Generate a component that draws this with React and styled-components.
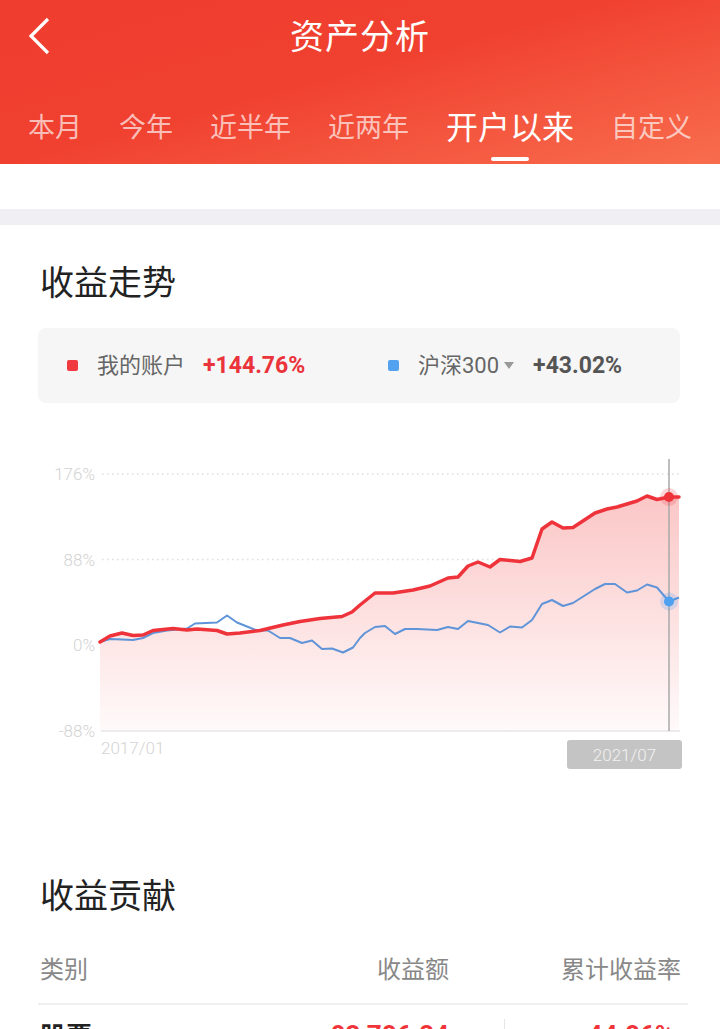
import React from 'react';
import styled, { createGlobalStyle } from 'styled-components';

const GlobalStyle = createGlobalStyle`
  html, body {
    margin: 0;
    padding: 0;
    background: #fff;
  }
  body {
    font-family: Roboto, "Noto Sans CJK SC", "Noto Sans", sans-serif;
    -webkit-font-smoothing: antialiased;
  }
`;

const Page = styled.div`
  width: 720px;
  height: 1029px;
  overflow: hidden;
  background: #fff;
`;

const Header = styled.header`
  height: 164px;
  background: linear-gradient(165deg, #ef3d2f 0%, #f0402f 45%, #f86d4e 100%);
  color: #fff;
`;

const TopBar = styled.div`
  height: 74px;
  display: grid;
  grid-template-columns: 100px 1fr 100px;
  align-items: center;
`;

const Back = styled.div`
  padding-left: 28px;
  display: flex;
  align-items: center;
  svg {
    display: block;
  }
`;

const Title = styled.h1`
  margin: 0;
  text-align: center;
  font-size: 34px;
  font-weight: 400;
  line-height: 40px;
  letter-spacing: 1px;
`;

const Tabs = styled.nav`
  height: 90px;
  display: flex;
  align-items: flex-end;
  gap: 37px;
  padding-left: 28px;
`;

const Tab = styled.div`
  display: flex;
  flex-direction: column;
  align-items: center;
  padding-bottom: 3px;
  .label {
    line-height: 40px;
    font-size: ${(p) => (p.$active ? '32px' : '27px')};
    color: ${(p) => (p.$active ? '#fff' : 'rgba(255, 255, 255, 0.66)')};
    white-space: nowrap;
  }
`;

const Indicator = styled.span`
  margin-top: 9px;
  width: 38px;
  height: 4px;
  border-radius: 2px;
  background: ${(p) => (p.$active ? '#fff' : 'transparent')};
`;

const Spacer = styled.div`
  height: 45px;
`;

const Band = styled.div`
  height: 16px;
  background: #f0f0f4;
`;

const Section = styled.section`
  padding: ${(p) => p.$top}px 32px 0 38px;
`;

const SectionTitle = styled.h2`
  margin: 0 0 0 2px;
  font-size: 34px;
  font-weight: 400;
  line-height: 40px;
  color: #222;
`;

const Legend = styled.div`
  margin-top: 25px;
  width: 642px;
  height: 75px;
  border-radius: 8px;
  background: #f6f6f6;
  display: grid;
  grid-template-columns: 1fr 1fr;
  align-items: center;
`;

const LegendItem = styled.div`
  display: flex;
  align-items: center;
  padding-left: 29px;
`;

const Swatch = styled.span`
  width: 11px;
  height: 11px;
  border-radius: 2px;
  background: ${(p) => p.$color};
  margin-right: 19px;
`;

const LegendName = styled.span`
  font-size: 22px;
  color: #666;
  line-height: 30px;
`;

const Caret = styled.span`
  margin-left: 5px;
  width: 0;
  height: 0;
  border-left: 5px solid transparent;
  border-right: 5px solid transparent;
  border-top: 7px solid #999;
`;

const LegendValue = styled.span`
  margin-left: ${(p) => p.$gap}px;
  font-size: 23px;
  font-weight: 700;
  color: ${(p) => p.$color};
  line-height: 30px;
`;

const ChartWrap = styled.div`
  margin: 37px 0 0 -38px;
  svg {
    display: block;
  }
`;

const Table = styled.div`
  margin-top: 37px;
  width: 650px;
`;

const Row = styled.div`
  display: grid;
  grid-template-columns: 1fr 200px 239px;
  align-items: start;
  padding: ${(p) => (p.$head ? '0 0 16px' : '14px 0 0')};
  border-bottom: ${(p) => (p.$head ? '2px solid #efefef' : 'none')};
`;

const Cell = styled.div`
  text-align: ${(p) => p.$align || 'left'};
  padding: 0 ${(p) => p.$pr || 0}px 0 ${(p) => p.$pl || 0}px;
  font-size: ${(p) => (p.$head ? '24px' : '26px')};
  line-height: ${(p) => (p.$head ? '34px' : '36px')};
  font-weight: ${(p) => (p.$bold ? 700 : 400)};
  color: ${(p) => p.$color || (p.$head ? '#888' : '#222')};
  white-space: nowrap;
`;

const Amount = styled.div`
  text-align: right;
  font-size: 26px;
  line-height: 32px;
  font-weight: 700;
  color: #f0343a;
  white-space: nowrap;
`;

const RateCell = styled.div`
  display: flex;
  align-items: flex-start;
  justify-content: space-between;
  padding-right: 14px;
  font-size: 26px;
  line-height: 32px;
  font-weight: 700;
  color: #f0343a;
`;

const Divider = styled.span`
  margin: 0 0 0 55px;
  width: 1px;
  height: 40px;
  background: #e6e6e6;
`;

const tabs = ['本月', '今年', '近半年', '近两年', '开户以来', '自定义'];

const mine = [
  [100, 642], [110, 636], [122, 633], [133, 635.5], [143, 635], [153, 630.5],
  [173, 628.5], [187, 630], [197, 629], [217, 630.5], [227, 634], [240, 633],
  [260, 630.5], [283, 625], [300, 621.5], [320, 618.5], [342, 616.5], [352, 612],
  [360, 605], [375, 593], [393, 593], [413, 590], [430, 586], [448, 578],
  [458, 577], [468, 566], [478, 562], [490, 567], [500, 559.5], [520, 561.5],
  [532, 558], [542, 529], [552, 522], [563, 528], [573, 527.5], [595, 513],
  [607, 509], [617, 507], [637, 501], [647, 496], [657, 499.5], [669, 497],
  [679, 497],
];

const index = [
  [100, 642], [110, 639], [133, 640], [143, 638], [153, 633], [167, 630.5],
  [187, 628.5], [195, 623.5], [217, 622.5], [227, 615.5], [237, 622.5],
  [257, 630.5], [268, 630.5], [280, 638], [290, 638], [302, 643], [312, 640.5],
  [322, 649], [332, 648.5], [343, 652.5], [353, 647.5], [360, 638], [365, 633],
  [375, 627], [385, 626], [395, 634], [405, 629], [417, 629], [437, 630],
  [448, 627], [458, 629], [468, 621], [488, 625], [500, 632.5], [510, 626.5],
  [522, 627.5], [532, 620], [542, 604], [552, 600], [563, 606], [573, 603],
  [595, 589], [605, 584], [615, 584], [627, 592.5], [637, 590.5], [647, 584.5],
  [657, 587.5], [669, 601.5], [679, 597.5],
];

const toLine = (pts) => pts.map((p, i) => `${i ? 'L' : 'M'}${p[0]} ${p[1]}`).join(' ');

const yLabels = [
  ['176%', 474],
  ['88%', 559.5],
  ['0%', 645],
  ['-88%', 731],
];

const Chart = () => {
  const area = `${toLine(mine)} L679 731 L100 731 Z`;
  return (
    <svg width="720" height="340" viewBox="0 440 720 340">
      <defs>
        <linearGradient id="fillRed" x1="0" y1="495" x2="0" y2="731" gradientUnits="userSpaceOnUse">
          <stop offset="0" stopColor="#fbc6c6" />
          <stop offset="1" stopColor="#fffafa" />
        </linearGradient>
      </defs>
      {yLabels.map(([t, y]) => (
        <text
          key={t}
          x="95"
          y={y}
          textAnchor="end"
          dominantBaseline="central"
          fontSize="17"
          fontWeight="300"
          fill="#d2d2d2"
          fontFamily="Roboto, sans-serif"
        >
          {t}
        </text>
      ))}
      {yLabels.slice(0, 3).map(([t, y]) => (
        <line key={t} x1="102" x2="680" y1={y} y2={y} stroke="#dedede" strokeWidth="1.5" strokeDasharray="1.5 3.5" />
      ))}
      <path d={area} fill="url(#fillRed)" />
      <line x1="101" x2="680" y1="731" y2="731" stroke="#ececec" strokeWidth="2" />
      <path d={toLine(index)} fill="none" stroke="#5f94d8" strokeWidth="2" strokeLinejoin="round" />
      <path d={toLine(mine)} fill="none" stroke="#ef333b" strokeWidth="3.5" strokeLinejoin="round" strokeLinecap="round" />
      <line x1="669" x2="669" y1="459" y2="731" stroke="#a8a8a8" strokeWidth="1.5" />
      <circle cx="669" cy="497" r="9" fill="rgba(239, 51, 59, 0.2)" />
      <circle cx="669" cy="497" r="5" fill="#ef333b" />
      <circle cx="669" cy="601.5" r="9" fill="rgba(78, 160, 240, 0.22)" />
      <circle cx="669" cy="601.5" r="5" fill="#4fa1f0" />
      <text
        x="101"
        y="748"
        dominantBaseline="central"
        fontSize="17"
        fontWeight="300"
        fill="#d4d4d4"
        fontFamily="Roboto, sans-serif"
      >
        2017/01
      </text>
      <rect x="567" y="740" width="115" height="29" rx="3" fill="#c4c4c4" />
      <text
        x="624.5"
        y="755"
        textAnchor="middle"
        dominantBaseline="central"
        fontSize="17"
        fontWeight="300"
        fill="#f2f2f2"
        fontFamily="Roboto, sans-serif"
      >
        2021/07
      </text>
    </svg>
  );
};

const App = () => {
  return (
    <Page>
      <GlobalStyle />
      <Header>
        <TopBar>
          <Back>
            <svg width="24" height="40" viewBox="0 0 24 40">
              <polyline points="20,2 3,19 20,36" fill="none" stroke="#fff" strokeWidth="3.2" />
            </svg>
          </Back>
          <Title>资产分析</Title>
          <div />
        </TopBar>
        <Tabs>
          {tabs.map((t) => (
            <Tab key={t} $active={t === '开户以来'}>
              <span className="label">{t}</span>
              <Indicator $active={t === '开户以来'} />
            </Tab>
          ))}
        </Tabs>
      </Header>
      <Spacer />
      <Band />

      <Section $top={38}>
        <SectionTitle>收益走势</SectionTitle>
        <Legend>
          <LegendItem>
            <Swatch $color="#f03a3f" />
            <LegendName>我的账户</LegendName>
            <LegendValue $gap={18} $color="#ea333a">+144.76%</LegendValue>
          </LegendItem>
          <LegendItem>
            <Swatch $color="#52a2f0" />
            <LegendName>沪深300</LegendName>
            <Caret />
            <LegendValue $gap={19} $color="#555">+43.02%</LegendValue>
          </LegendItem>
        </Legend>
        <ChartWrap>
          <Chart />
        </ChartWrap>
      </Section>

      <Section $top={96}>
        <SectionTitle>收益贡献</SectionTitle>
        <Table>
          <Row $head>
            <Cell $head $pl={2}>类别</Cell>
            <Cell $head $align="right">收益额</Cell>
            <Cell $head $align="right" $pr={7}>累计收益率</Cell>
          </Row>
          <Row>
            <Cell $bold $pl={2}>股票</Cell>
            <Amount>+93,786.24</Amount>
            <RateCell>
              <Divider />
              <span>+44.86%</span>
            </RateCell>
          </Row>
        </Table>
      </Section>
    </Page>
  );
};

export default App;
